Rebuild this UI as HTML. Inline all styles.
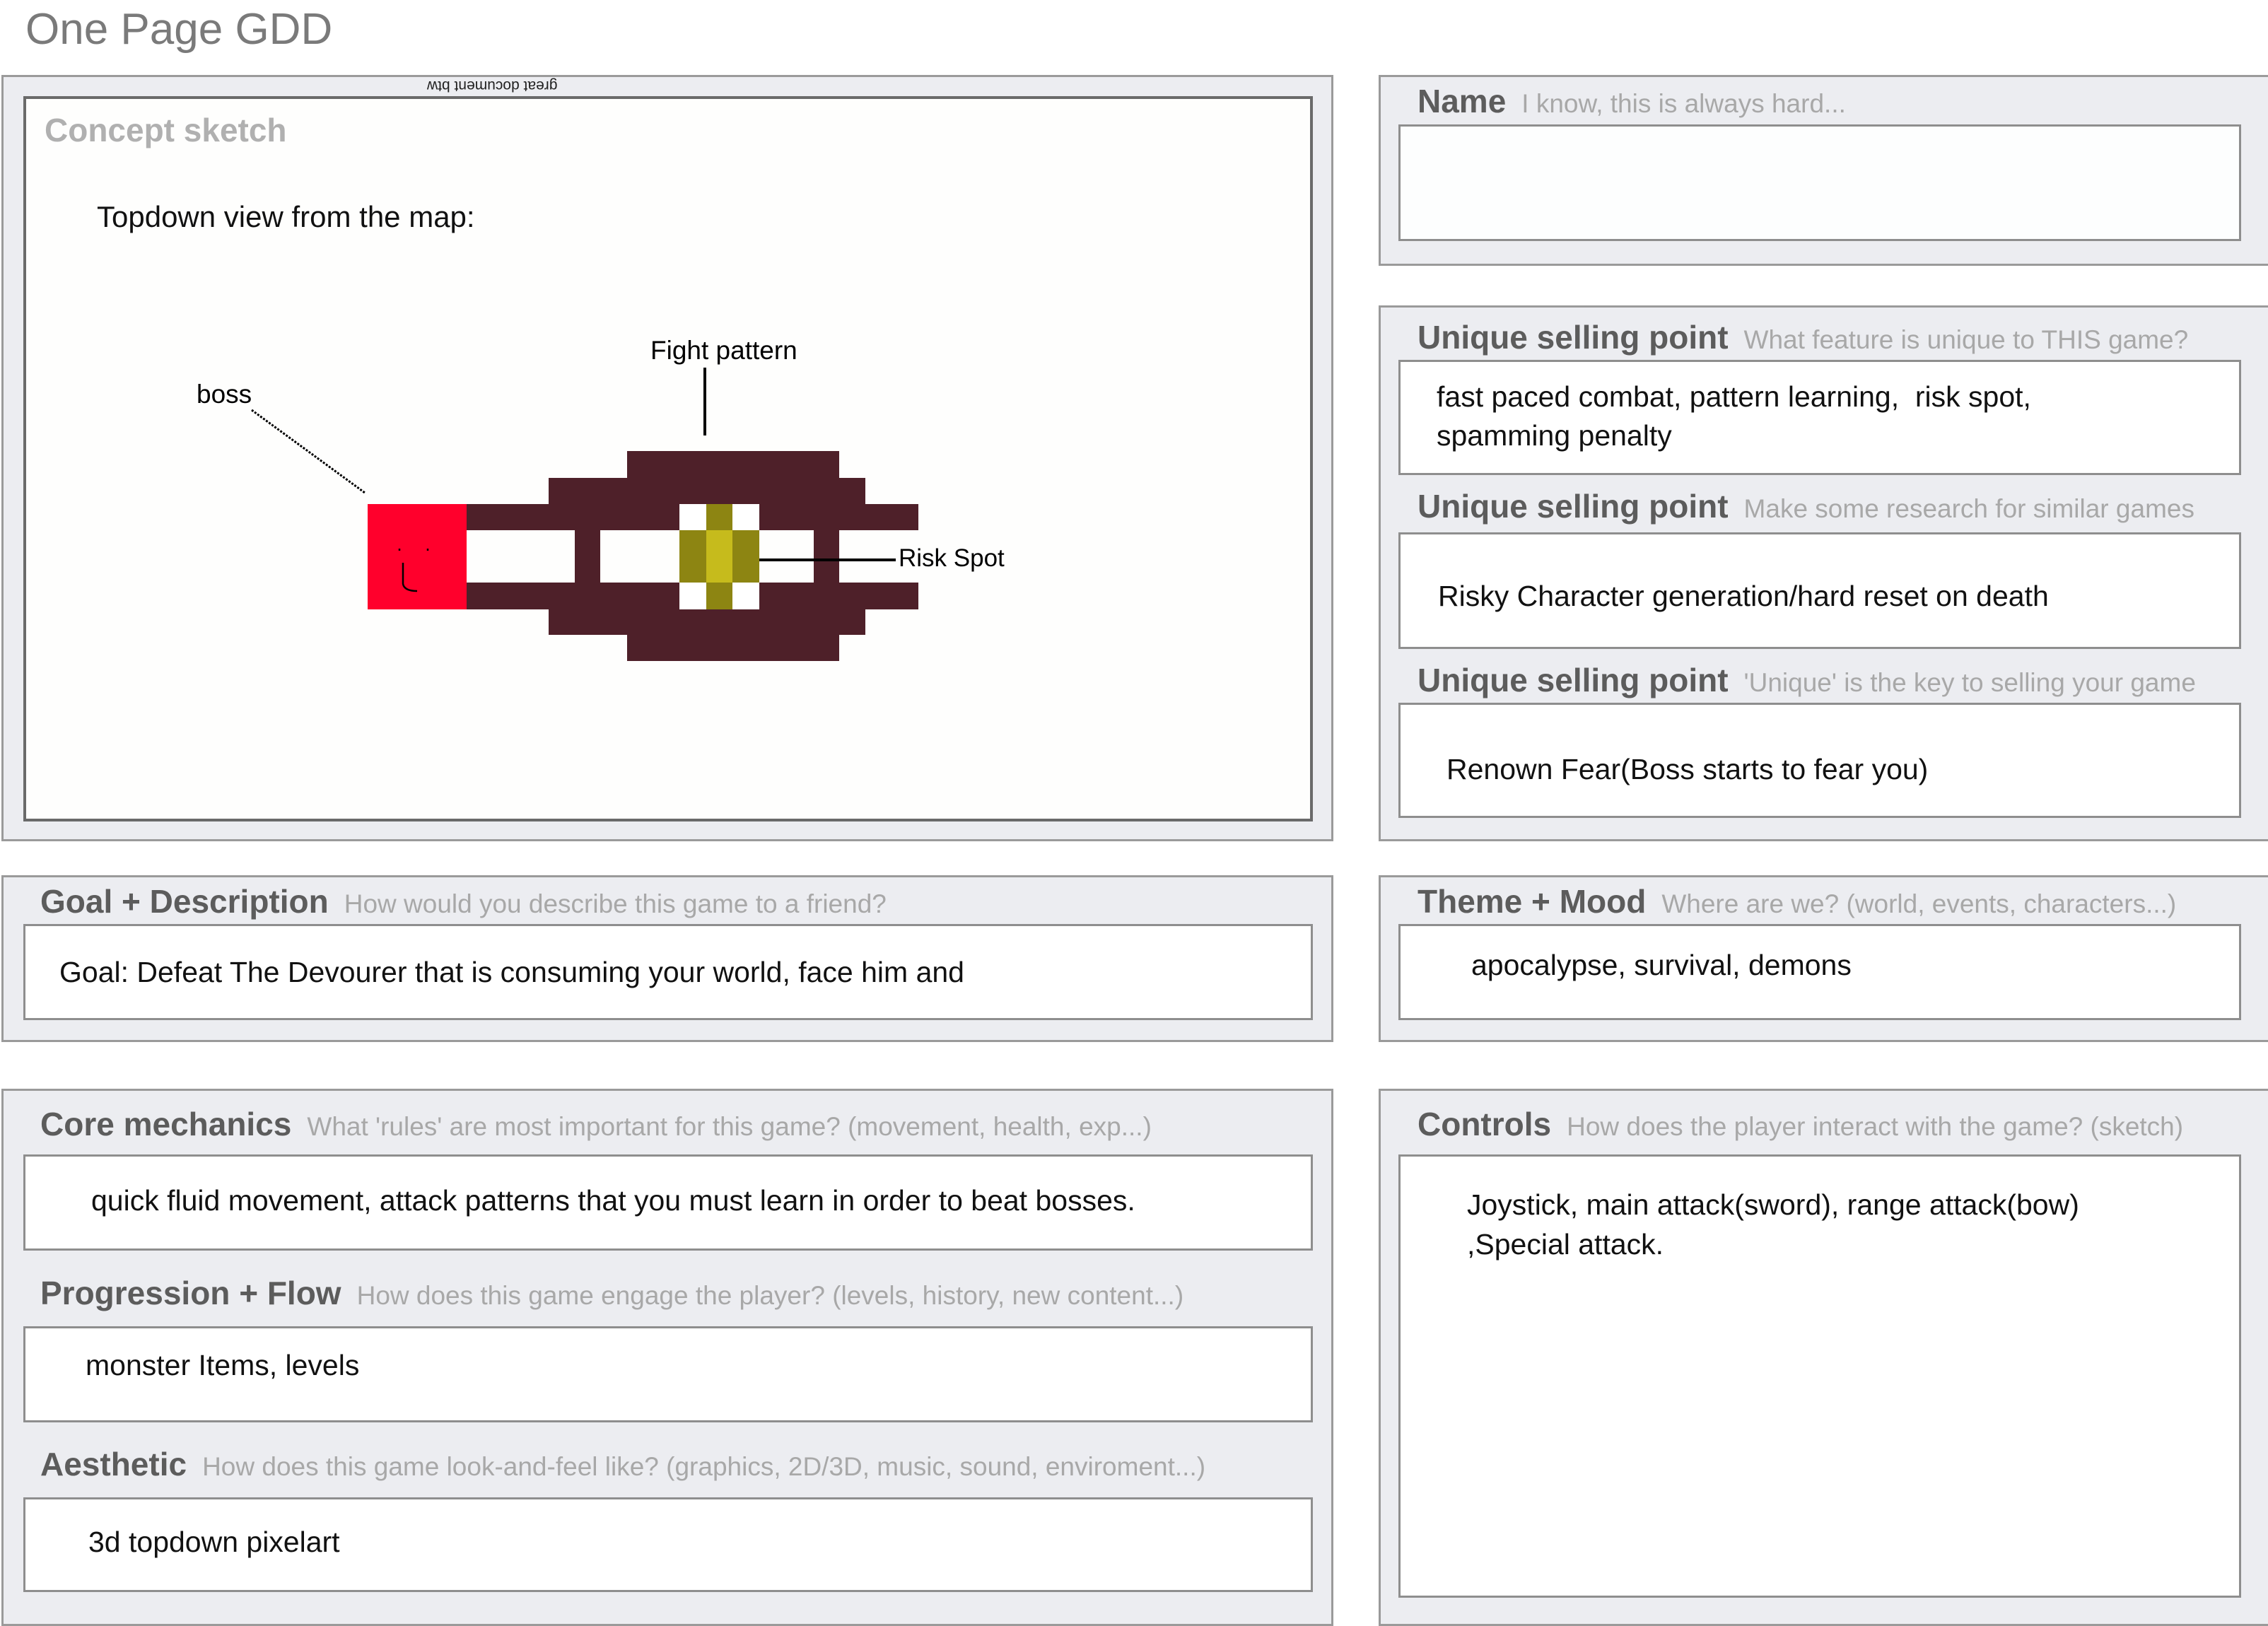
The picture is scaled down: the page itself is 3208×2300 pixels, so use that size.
<!DOCTYPE html>
<html><head><meta charset="utf-8"><style>
*{margin:0;padding:0;box-sizing:border-box}
body{width:3208px;height:2299px;background:#fff;position:relative;overflow:hidden;font-family:"Liberation Sans",sans-serif}
.a{position:absolute}
.p{position:absolute;background:#ecedf1;border:3px solid #9a9a9a}
.b{position:absolute;background:#fff;border:3px solid #8e8e8e}
.t{position:absolute;height:60px;line-height:60px;white-space:nowrap}
.h{font-weight:bold;font-size:46px;color:#5c5c5c}
.h span{font-weight:normal;font-size:37px;color:#a8a8a8;margin-left:22px}
.c{font-size:41px;color:#111}
.d{position:absolute;background:#4e2029}
#sk{position:absolute;left:-5px;top:-4px;width:1900px;height:1000px}
</style></head><body>
<div class="t" style="left:36px;top:12px;font-size:62px;color:#7a7a7a">One Page GDD</div>

<div class="p" style="left:2px;top:106px;width:1884px;height:1084px"></div>
<div class="a" style="left:33px;top:136px;width:1824px;height:1026px;background:#fefefd;border:4px solid #6a6a6a"></div>
<div class="t" style="left:604px;top:91px;font-size:21px;transform:rotate(180deg);color:#222">great document btw</div>
<div class="t h" style="left:63px;top:154px;color:#b0b0b0">Concept sketch</div>
<div class="t c" style="left:137px;top:277px;font-size:42px">Topdown view from the map:</div>

<div id="sk">
<div class="d" style="left:892px;top:642px;width:300px;height:38px"></div>
<div class="d" style="left:781px;top:680px;width:448px;height:37px"></div>
<div class="d" style="left:665px;top:717px;width:639px;height:37px"></div>
<div class="d" style="left:818px;top:754px;width:36px;height:74px"></div>
<div class="d" style="left:1156px;top:754px;width:36px;height:74px"></div>
<div class="d" style="left:665px;top:828px;width:639px;height:38px"></div>
<div class="d" style="left:781px;top:866px;width:448px;height:36px"></div>
<div class="d" style="left:892px;top:902px;width:300px;height:37px"></div>
<div class="a" style="left:966px;top:717px;width:113px;height:149px;background:#fff"></div>
<div class="a" style="left:1004px;top:717px;width:37px;height:149px;background:#8d8512"></div>
<div class="a" style="left:966px;top:754px;width:113px;height:74px;background:#8d8512"></div>
<div class="a" style="left:1004px;top:754px;width:37px;height:74px;background:#c6bb1c"></div>
<div class="a" style="left:525px;top:717px;width:140px;height:149px;background:#ff002c"></div>
<svg class="a" style="left:0;top:0" width="1900" height="1000">
<line x1="1079" y1="796" x2="1272" y2="796" stroke="#000" stroke-width="4"/>
<line x1="1002" y1="524" x2="1002" y2="620" stroke="#000" stroke-width="4"/>
<line x1="361" y1="584" x2="521" y2="701" stroke="#000" stroke-width="3" stroke-dasharray="3 2"/>
<path d="M570 780 v3 M610 780 v3 M575 800 v30 q2 10 20 10" stroke="#000" stroke-width="2.5" fill="none"/>
</svg>
</div>
<div class="t" style="left:1271px;top:760px;font-size:35px;color:#000">Risk Spot</div>
<div class="t" style="left:920px;top:466px;font-size:37px;color:#000">Fight pattern</div>
<div class="t" style="left:278px;top:528px;font-size:37px;color:#000">boss</div>

<div class="p" style="left:1950px;top:106px;width:1262px;height:270px"></div>
<div class="t h" style="left:2005px;top:113px">Name<span>I know, this is always hard...</span></div>
<div class="b" style="left:1978px;top:176px;width:1192px;height:165px;background:#fdfefe"></div>

<div class="p" style="left:1950px;top:432px;width:1262px;height:758px"></div>
<div class="t h" style="left:2005px;top:447px">Unique selling point<span>What feature is unique to THIS game?</span></div>
<div class="b" style="left:1978px;top:509px;width:1192px;height:163px"></div>
<div class="t c" style="left:2032px;top:531px">fast paced combat, pattern learning,&nbsp; risk spot,</div>
<div class="t c" style="left:2032px;top:586px">spamming penalty</div>
<div class="t h" style="left:2005px;top:686px">Unique selling point<span>Make some research for similar games</span></div>
<div class="b" style="left:1978px;top:753px;width:1192px;height:165px"></div>
<div class="t c" style="left:2034px;top:813px">Risky Character generation/hard reset on death</div>
<div class="t h" style="left:2005px;top:932px">Unique selling point<span>'Unique' is the key to selling your game</span></div>
<div class="b" style="left:1978px;top:994px;width:1192px;height:163px"></div>
<div class="t c" style="left:2046px;top:1058px">Renown Fear(Boss starts to fear you)</div>

<div class="p" style="left:2px;top:1238px;width:1884px;height:236px"></div>
<div class="t h" style="left:57px;top:1245px">Goal + Description<span>How would you describe this game to a friend?</span></div>
<div class="b" style="left:33px;top:1307px;width:1824px;height:136px"></div>
<div class="t c" style="left:84px;top:1345px">Goal: Defeat The Devourer that is consuming your world, face him and</div>

<div class="p" style="left:1950px;top:1238px;width:1262px;height:236px"></div>
<div class="t h" style="left:2005px;top:1245px">Theme + Mood<span>Where are we? (world, events, characters...)</span></div>
<div class="b" style="left:1978px;top:1307px;width:1192px;height:136px"></div>
<div class="t c" style="left:2081px;top:1335px">apocalypse, survival, demons</div>

<div class="p" style="left:2px;top:1540px;width:1884px;height:760px"></div>
<div class="t h" style="left:57px;top:1560px">Core mechanics<span>What 'rules' are most important for this game? (movement, health, exp...)</span></div>
<div class="b" style="left:33px;top:1633px;width:1824px;height:136px"></div>
<div class="t c" style="left:129px;top:1668px">quick fluid movement, attack patterns that you must learn in order to beat bosses.</div>
<div class="t h" style="left:57px;top:1799px">Progression + Flow<span>How does this game engage the player? (levels, history, new content...)</span></div>
<div class="b" style="left:33px;top:1876px;width:1824px;height:136px"></div>
<div class="t c" style="left:121px;top:1901px">monster Items, levels</div>
<div class="t h" style="left:57px;top:2041px">Aesthetic<span>How does this game look-and-feel like? (graphics, 2D/3D, music, sound, enviroment...)</span></div>
<div class="b" style="left:33px;top:2118px;width:1824px;height:134px"></div>
<div class="t c" style="left:125px;top:2151px">3d topdown pixelart</div>

<div class="p" style="left:1950px;top:1540px;width:1262px;height:760px"></div>
<div class="t h" style="left:2005px;top:1560px">Controls<span>How does the player interact with the game? (sketch)</span></div>
<div class="b" style="left:1978px;top:1633px;width:1192px;height:627px"></div>
<div class="t c" style="left:2075px;top:1674px">Joystick, main attack(sword), range attack(bow)</div>
<div class="t c" style="left:2075px;top:1730px">,Special attack.</div>
</body></html>
